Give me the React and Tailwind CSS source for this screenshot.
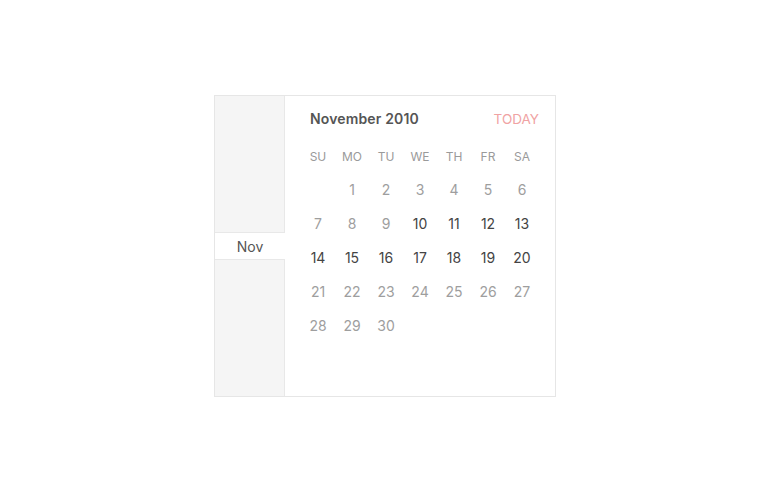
import React from "react";

const weeks = [
  [null, 1, 2, 3, 4, 5, 6],
  [7, 8, 9, 10, 11, 12, 13],
  [14, 15, 16, 17, 18, 19, 20],
  [21, 22, 23, 24, 25, 26, 27],
  [28, 29, 30, null, null, null, null],
];
const dark = new Set([10, 11, 12, 13, 14, 15, 16, 17, 18, 19, 20]);
const days = ["SU", "MO", "TU", "WE", "TH", "FR", "SA"];

export default function App() {
  return (
    <div className="w-[770px] h-[492px] bg-white flex items-center justify-center" style={{ fontFamily: "Inter, 'Noto Sans', sans-serif" }}>
      <div className="w-[342px] h-[302px] border border-[#e6e6e6] flex bg-white">
        <div className="w-[70px] flex flex-col">
          <div className="h-[136px] bg-[#f5f5f5] border-r border-[#e8e8e8]" />
          <div className="h-[28px] bg-white border-y border-[#e8e8e8] flex items-center justify-center text-[14px] text-[#555]">Nov</div>
          <div className="flex-1 bg-[#f5f5f5] border-r border-[#e8e8e8]" />
        </div>
        <div className="flex-1 pl-[16px] pr-[16px]">
          <div className="mt-[13px] pl-[9px] flex items-center justify-between leading-[20px]">
            <span className="text-[14px] font-semibold text-[#555] tracking-[0.15px]">November 2010</span>
            <span className="text-[13.5px] text-[#f0a3a3]">TODAY</span>
          </div>
          <div className="mt-[13px] grid grid-cols-7">
            {days.map((d) => (
              <div key={d} className="h-[30px] flex items-center justify-center text-[12px] text-[#9a9a9a]">{d}</div>
            ))}
            {weeks.flat().map((n, i) => (
              <div key={i} className={`h-[34px] flex items-center justify-center text-[14px] ${dark.has(n) ? "text-[#444]" : "text-[#9e9e9e]"}`}>
                {n ?? ""}
              </div>
            ))}
          </div>
        </div>
      </div>
    </div>
  );
}
